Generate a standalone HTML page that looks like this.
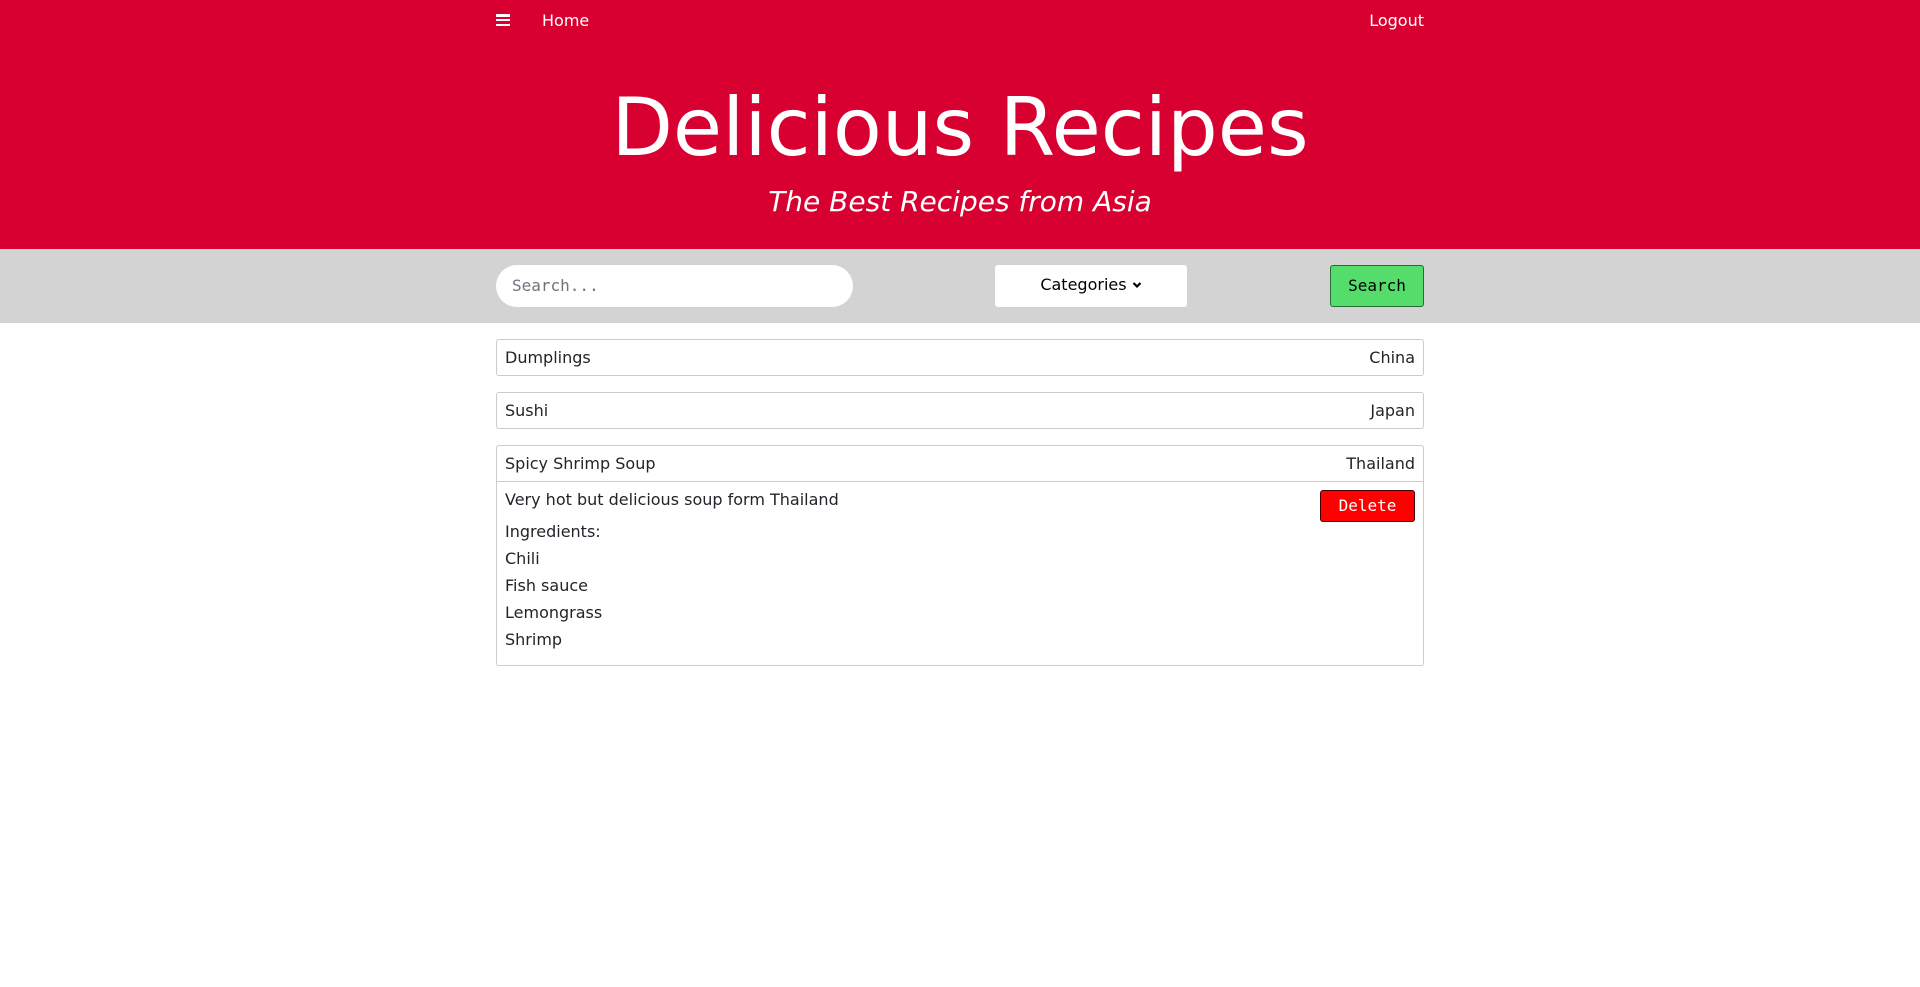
<!DOCTYPE html>
<html><head><meta charset="utf-8"><style>
*{box-sizing:border-box;margin:0;padding:0}
body{width:1920px;height:987px;background:#fff;font-family:"DejaVu Sans","Liberation Sans",sans-serif;font-size:16px;color:#212529;overflow:hidden}
.hdr{background:#d70030;height:249px;position:relative;color:#fff}
.nav{position:absolute;left:496px;width:928px;top:8px;height:24px;display:flex;align-items:center;font-size:16px}
.burger{width:14px;height:12px;display:flex;flex-direction:column;justify-content:space-between;margin-right:32px}
.burger i{display:block;height:2.5px;background:#fff}
.nav .lo{margin-left:auto}
h1{position:absolute;top:78px;width:100%;text-align:center;font-size:80px;line-height:100px;font-weight:normal}
h2{position:absolute;top:184px;width:100%;text-align:center;font-style:italic;font-weight:normal;font-size:28px;line-height:36px}
.bar{background:#d3d3d3;height:74px;position:relative}
.inp{position:absolute;left:496px;top:16px;width:357px;height:42px;background:#fff;border-radius:21px;font-family:"DejaVu Sans Mono",monospace;font-size:16px;color:#6c757d;padding:0 16px;line-height:42px}
.cat{position:absolute;left:995px;top:16px;width:192px;height:42px;background:#fff;border-radius:3px;text-align:center;line-height:40px;color:#000}
.sb{position:absolute;left:1330px;top:16px;width:94px;height:42px;background:#55dd6b;border:1px solid #2a6a33;border-radius:3px;font-family:"DejaVu Sans Mono",monospace;text-align:center;line-height:40px;color:#000}
.row{position:absolute;left:496px;width:928px;border:1px solid #ccc;border-radius:3px}
.rh{height:35px;display:flex;align-items:center;justify-content:space-between;padding:0 8px}
.body{border-top:1px solid #ccc;padding:4px 8px;position:relative}
.body p{line-height:27px}
.del{position:absolute;right:8px;top:8px;width:95px;height:32px;background:#ff0000;border:1px solid #400;border-radius:3px;color:#fff;font-family:"DejaVu Sans Mono",monospace;text-align:center;line-height:30px}
</style></head><body>
<div class="hdr">
<div class="nav"><div class="burger"><i></i><i></i><i></i></div><span>Home</span><span class="lo">Logout</span></div>
<h1>Delicious Recipes</h1>
<h2>The Best Recipes from Asia</h2>
</div>
<div class="bar">
<div class="inp">Search...</div>
<div class="cat">Categories <svg width="10" height="8" viewBox="0 0 10 8" style="vertical-align:1px"><path d="M1.5 2 L5 5.5 L8.5 2" fill="none" stroke="#000" stroke-width="2.2"/></svg></div>
<div class="sb">Search</div>
</div>
<div class="row" style="top:339px"><div class="rh"><span>Dumplings</span><span>China</span></div></div>
<div class="row" style="top:392px"><div class="rh"><span>Sushi</span><span>Japan</span></div></div>
<div class="row" style="top:445px;height:221px"><div class="rh"><span>Spicy Shrimp Soup</span><span>Thailand</span></div>
<div class="body">
<p style="margin-bottom:5px">Very hot but delicious soup form Thailand</p>
<p>Ingredients:</p><p>Chili</p><p>Fish sauce</p><p>Lemongrass</p><p>Shrimp</p>
<div class="del">Delete</div>
</div></div>
</body></html>
